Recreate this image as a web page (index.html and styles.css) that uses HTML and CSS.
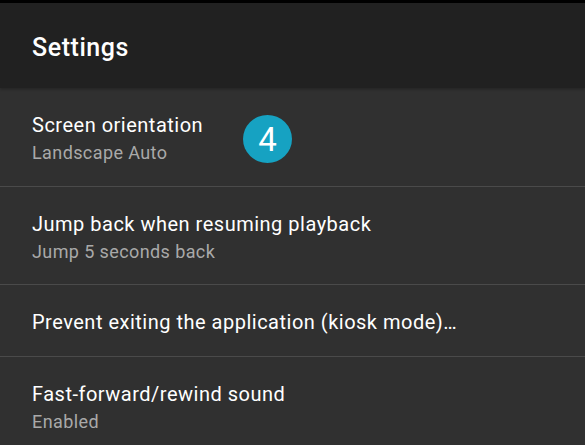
FILE: index.html
```html
<!DOCTYPE html>
<html lang="en">
<head>
    <meta charset="UTF-8">
    <meta name="viewport" content="width=device-width, initial-scale=1.0">
    <title>Settings</title>
    <link rel="stylesheet" href="styles.css">
</head>
<body>

<div class="status-bar"></div>

<header class="toolbar">
    <h1>Settings</h1>
</header>

<ul class="pref-list">
    <li class="pref-item">
        <div class="pref-text">
            <div class="pref-title">Screen orientation</div>
            <div class="pref-summary">Landscape Auto</div>
        </div>
        <span class="step-badge">4</span>
    </li>
    <li class="pref-item">
        <div class="pref-text">
            <div class="pref-title">Jump back when resuming playback</div>
            <div class="pref-summary">Jump 5 seconds back</div>
        </div>
    </li>
    <li class="pref-item single">
        <div class="pref-text">
            <div class="pref-title">Prevent exiting the application (kiosk mode)…</div>
        </div>
    </li>
    <li class="pref-item">
        <div class="pref-text">
            <div class="pref-title">Fast-forward/rewind sound</div>
            <div class="pref-summary">Enabled</div>
        </div>
    </li>
</ul>

</body>
</html>
```

FILE: styles.css
```css
body {
    margin: 0;
    font-family: Roboto, 'Noto Sans', sans-serif;
    background-color: #303030;
    color: #fff;
    overflow: hidden;
}

.status-bar {
    height: 3px;
    background-color: #000;
}

.toolbar {
    height: 85px;
    background-color: #212121;
    display: flex;
    align-items: center;
    padding: 0 32px;
    box-shadow: 0 1px 3px rgba(0, 0, 0, 0.3);
    position: relative;
}

.toolbar h1 {
    margin: 3px 0 0 0;
    font-size: 25px;
    font-weight: 500;
    letter-spacing: 0.55px;
}

.pref-list {
    list-style: none;
    margin: 0;
    padding: 0;
}

.pref-item {
    position: relative;
    height: 98px;
    padding: 25px 32px 0;
    box-sizing: border-box;
    border-bottom: 1px solid #4a4a4a;
}

.pref-item:first-child {
    height: 99px;
}

.pref-item.single {
    height: 72px;
}

.pref-title {
    font-size: 20px;
    line-height: 24px;
    letter-spacing: 0.5px;
}

.pref-summary {
    font-size: 18px;
    line-height: 22px;
    margin-top: 5px;
    letter-spacing: 0.4px;
    color: #a9a9a9;
}

/* tutorial marker over the first row */
.step-badge {
    position: absolute;
    top: 27px;
    left: 243px;
    width: 49px;
    height: 48px;
    border-radius: 50%;
    background-color: #16a2c2;
    display: flex;
    align-items: center;
    justify-content: center;
    font-size: 33px;
    color: #fff;
}
```
